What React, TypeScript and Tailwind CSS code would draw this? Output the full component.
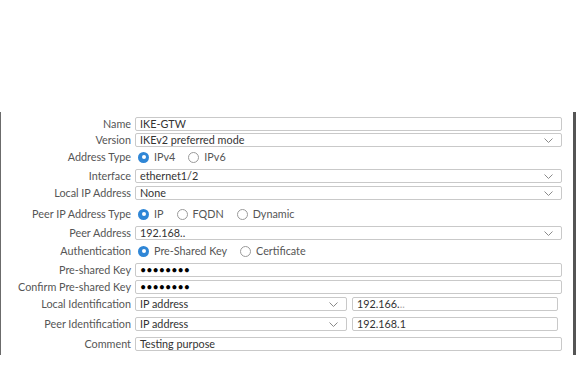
import React from "react";

function Chevron() {
  return (
    <svg width="9" height="5" viewBox="0 0 9 5" className="shrink-0">
      <path d="M0.5 0.5 L4.5 4.5 L8.5 0.5" fill="none" stroke="#8a8a8a" strokeWidth="1" />
    </svg>
  );
}

function Box({ children, select, className = "" }: { children: React.ReactNode; select?: boolean; className?: string }) {
  return (
    <div
      className={`h-[14px] flex items-center justify-between border border-[#c9c9c9] rounded-[2px] pl-[4px] pr-[8px] bg-white text-[#333] ${className}`}
    >
      <span className="leading-none whitespace-nowrap">{children}</span>
      {select && <Chevron />}
    </div>
  );
}

function Radio({ checked, label, first }: { checked?: boolean; label: string; first?: boolean }) {
  return (
    <div className={`flex items-center ${first ? "ml-[3px]" : "ml-[13px]"}`}>
      {checked ? (
        <span className="w-[11px] h-[11px] rounded-full bg-[#2f86d6] flex items-center justify-center">
          <span className="w-[4px] h-[4px] rounded-full bg-white" />
        </span>
      ) : (
        <span className="w-[11px] h-[11px] rounded-full border border-[#9a9a9a] bg-white" />
      )}
      <span className="ml-[5px] text-[#555] leading-none">{label}</span>
    </div>
  );
}

function Row({ label, mt, children }: { label: string; mt: string; children: React.ReactNode }) {
  return (
    <div className={`flex items-center h-[14px] ${mt}`}>
      <div className="w-[130px] text-right text-[#555] leading-none whitespace-nowrap">{label}</div>
      <div className="ml-[4px] flex items-center">{children}</div>
    </div>
  );
}

export default function App() {
  return (
    <div className="w-[576px] h-[387px] pt-[112px] bg-white" style={{ fontFamily: "Lato, 'Liberation Sans', sans-serif" }}>
      <div className="h-[243px] border-l border-l-[#6b6b6b] border-r-[3px] border-r-[#555] text-[10.8px]">
        <div className="pt-[5px]">
          <Row label="Name" mt="">
            <Box className="w-[427px]">IKE-GTW</Box>
          </Row>
          <Row label="Version" mt="mt-[2px]">
            <Box select className="w-[427px]">IKEv2 preferred mode</Box>
          </Row>
          <Row label="Address Type" mt="mt-[3px]">
            <Radio first checked label="IPv4" />
            <Radio label="IPv6" />
          </Row>
          <Row label="Interface" mt="mt-[5px]">
            <Box select className="w-[427px]">ethernet1/2</Box>
          </Row>
          <Row label="Local IP Address" mt="mt-[3px]">
            <Box select className="w-[427px]">None</Box>
          </Row>
          <Row label="Peer IP Address Type" mt="mt-[7px]">
            <Radio first checked label="IP" />
            <Radio label="FQDN" />
            <Radio label="Dynamic" />
          </Row>
          <Row label="Peer Address" mt="mt-[5px]">
            <Box select className="w-[427px]">192.168..</Box>
          </Row>
          <Row label="Authentication" mt="mt-[4px]">
            <Radio first checked label="Pre-Shared Key" />
            <Radio label="Certificate" />
          </Row>
          <Row label="Pre-shared Key" mt="mt-[5px]">
            <Box className="w-[427px]">
              <span className="text-black">••••••••</span>
            </Box>
          </Row>
          <Row label="Confirm Pre-shared Key" mt="mt-[3px]">
            <Box className="w-[427px]">
              <span className="text-black">••••••••</span>
            </Box>
          </Row>
          <Row label="Local Identification" mt="mt-[3px]">
            <Box select className="w-[212px]">IP address</Box>
            <Box className="w-[206px] ml-[5px]">
              192.166.<span className="text-[#aaa]">..</span>
            </Box>
          </Row>
          <Row label="Peer Identification" mt="mt-[6px]">
            <Box select className="w-[212px]">IP address</Box>
            <Box className="w-[206px] ml-[5px]">192.168.1</Box>
          </Row>
          <Row label="Comment" mt="mt-[6px]">
            <Box className="w-[427px]">Testing purpose</Box>
          </Row>
        </div>
      </div>
    </div>
  );
}
